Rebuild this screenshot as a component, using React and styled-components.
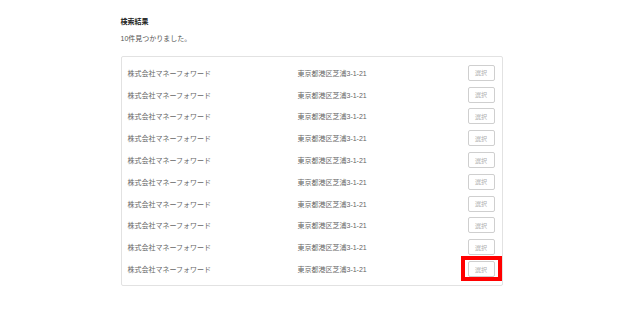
import styled, { createGlobalStyle } from "styled-components";

const GlobalStyle = createGlobalStyle`
  html, body {
    margin: 0;
    padding: 0;
    background: #fff;
  }
  body {
    font-family: "Liberation Sans", "Noto Sans CJK JP", sans-serif;
  }
`;

const Page = styled.div`
  width: 623px;
  height: 327px;
  display: flex;
  justify-content: center;
`;

const Wrapper = styled.div`
  width: 382px;
  padding-top: 17px;
`;

const Title = styled.div`
  font-size: 7px;
  font-weight: bold;
  color: #222;
  line-height: 10px;
`;

const Count = styled.div`
  margin-top: 7px;
  font-size: 7px;
  color: #555;
  line-height: 10px;
`;

const Card = styled.div`
  margin-top: 12px;
  border: 1px solid #e2e2e2;
  border-radius: 2px;
  padding: 5px 7px 5px 6px;
`;

const Row = styled.div`
  display: grid;
  grid-template-columns: 170px 1fr auto;
  align-items: center;
  height: 21.8px;
  font-size: 7px;
  color: #666;
`;

const SelectButton = styled.button`
  position: relative;
  width: 27px;
  height: 16px;
  padding: 0;
  border: 1px solid #cfcfcf;
  border-radius: 2px;
  background: #fff;
  color: #b0b0b0;
  font-family: inherit;
  font-size: 6px;
  cursor: pointer;

  ${(p) =>
    p.$highlight &&
    `
    &::after {
      content: "";
      position: absolute;
      top: -6px;
      bottom: -5px;
      left: -8px;
      right: -8px;
      border: 4px solid #f00;
    }
  `}
`;

const results = Array.from({ length: 10 }, () => ({
  name: "株式会社マネーフォワード",
  address: "東京都港区芝浦3-1-21",
}));

const App = () => {
  return (
    <>
      <GlobalStyle />
      <Page>
        <Wrapper>
          <Title>検索結果</Title>
          <Count>10件見つかりました。</Count>
          <Card>
            {results.map((r, i) => (
              <Row key={i}>
                <span>{r.name}</span>
                <span>{r.address}</span>
                <SelectButton $highlight={i === results.length - 1}>選択</SelectButton>
              </Row>
            ))}
          </Card>
        </Wrapper>
      </Page>
    </>
  );
};

export default App;
